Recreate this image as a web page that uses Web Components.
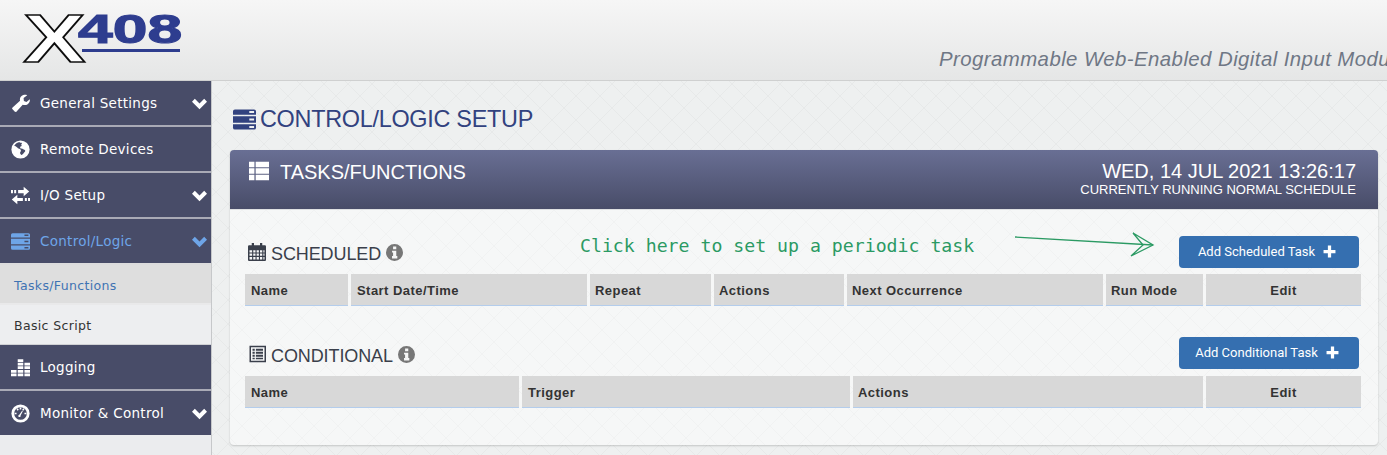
<!DOCTYPE html>
<html>
<head>
<meta charset="utf-8">
<title>X408 Control/Logic Setup</title>
<style>
  html, body { margin: 0; height: 455px; overflow: hidden; }
  body {
    font-family: "Liberation Sans", Arial, sans-serif;
    background-color: #eef0f0;
    background-image: url("data:image/svg+xml,%3Csvg xmlns='http://www.w3.org/2000/svg' width='24' height='24'%3E%3Cpath d='M0 0L24 24M24 0L0 24' stroke='%23e7e9e9' stroke-width='1' fill='none'/%3E%3C/svg%3E");
  }
  .layout { display: flex; height: 374px; }
</style>
</head>
<body>

<app-header tagline="Programmable Web-Enabled Digital Input Module"></app-header>
<div class="layout">
  <side-nav>
    <nav-item icon="wrench" arrow>General Settings</nav-item>
    <nav-item icon="globe">Remote Devices</nav-item>
    <nav-item icon="exchange" arrow>I/O Setup</nav-item>
    <nav-item icon="server" arrow active>Control/Logic</nav-item>
    <sub-item current>Tasks/Functions</sub-item>
    <sub-item>Basic Script</sub-item>
    <nav-item icon="bars">Logging</nav-item>
    <nav-item icon="gauge" arrow last>Monitor &amp; Control</nav-item>
  </side-nav>
  <main-area heading="CONTROL/LOGIC SETUP">
    <task-panel heading="TASKS/FUNCTIONS" clock="WED, 14 JUL 2021 13:26:17" status="CURRENTLY RUNNING NORMAL SCHEDULE">
      <task-section icon="calendar" heading="SCHEDULED" button="Add Scheduled Task"
        cols="103px 236px 121px 130px 256px 97px 155px"
        names="Name|Start Date/Time|Repeat|Actions|Next Occurrence|Run Mode|Edit"></task-section>
      <task-section icon="listalt" heading="CONDITIONAL" button="Add Conditional Task"
        cols="274px 328px 350px 155px"
        names="Name|Trigger|Actions|Edit"></task-section>
      <click-note slot="note">Click here to set up a periodic task</click-note>
    </task-panel>
  </main-area>
</div>

<script>
// shared icon paths
const ICONS = {
  wrench: '<path fill="currentColor" d="M5.2 22.6 2 19.4a1.6 1.6 0 0 1 0-2.3l9.4-8.6C10.6 5.2 12.4 2.400 15.500 1.400c1.700-.6 3.400-.5 5 .2l-4.600 3.600.4 3.500 3.200 1.300 4.300-3.500c.3 2.600-.6 4.800-2.700 6.300-2 1.400-4.200 1.500-6.300.7l-8.300 9.300a1.600 1.600 0 0 1-1.300-.7z"/>',
  globe: '<circle cx="12" cy="12" r="11.500" fill="currentColor"/><path fill="#484c68" d="M11 2.500c-3 .4-5.600 2.200-7 4.800 1.500.2 2.300 1.200 3.500 1.800 1.100.6 1.500 1.800 2.800 2 1.300.3 2.400 1 2.200 2.500-.1 1.200-1.300 1.700-1 3 .2 1 1.300 1.400 1.600 2.500 1.200-.4 2.200-1.700 3-2.800.6-.9 1.800-1.300 1.900-2.500.1-1-1-1.500-1.900-1.900-1.100-.5-2.100-.9-3.300-1.100-.9-.2-1.500-1-1.200-2 .3-.8 1.300-.6 1.700-1.200.4-.8-.4-1.300-.3-2.100 0-.8 1-1 .9-1.800-.7-.2-1.700-.3-2.900-.2z"/>',
  exchange: '<path fill="currentColor" d="M9 5h7V1l7 6-7 6V9H9zM4 5h2.500v4H4zM0 5h2.500v4H0zM15 15H8v-4l-7 6 7 6v-4h7zM17.500 15H20v4h-2.500zM21.500 15H24v4h-2.500z"/>',
  server: '<path fill="currentColor" fill-rule="evenodd" d="M2 1.500h20a2 2 0 0 1 2 2v3.500H0V3.500a2 2 0 0 1 2-2zM17 3.200v2h5v-2zM0 8.500h24v7H0zM17 11v2h5v-2zM0 17h24v3.500a2 2 0 0 1-2 2H2a2 2 0 0 1-2-2zM17 18.800v2h5v-2z"/>',
  bars: '<path fill="currentColor" d="M0 19.500h7V23H0zM0 15h7v3.500H0zM8.500 19.500h7V23h-7zM8.500 15h7v3.500h-7zM8.500 10.500h7V14h-7zM8.500 6h7v3.500h-7zM8.500 1.500h7V5h-7zM17 19.500h7V23h-7zM17 15h7v3.500h-7zM17 10.500h7V14h-7zM17 6h7v3.500h-7z"/>',
  gauge: '<circle cx="12" cy="12" r="11.500" fill="currentColor"/><circle cx="12" cy="12" r="8" fill="#484c68"/><path fill="currentColor" d="M4.500 11h2.500v2H4.500zM17 11h2.500v2H17zM7 6.500l1.500-1 1.300 1.800-1.500 1.100zM11 4.500h2V7h-2zM15.500 5.500l1.500 1-1.500 2-1.500-1zM10.500 13.500l3.500-5 .9.600-2.800 5.300a1.500 1.500 0 1 1-1.600-.900z"/>',
  chevron: '<path fill="currentColor" d="M12 21 0 9l4.500-4.500L12 12l7.500-7.500L24 9z"/>',
  list: '<path fill="currentColor" d="M0 1h6.500v6.500H0zM8 1h16v6.500H8zM0 8.750h6.500v6.500H0zM8 8.750h16v6.500H8zM0 16.500h6.500V23H0zM8 16.500h16V23H8z"/>',
  calendar: '<path fill="currentColor" fill-rule="evenodd" d="M5 0h3v3h8V0h3v3h3.500A1.500 1.500 0 0 1 24 4.500V22.500a1.500 1.500 0 0 1-1.500 1.500h-21A1.500 1.500 0 0 1 0 22.500V4.500A1.500 1.500 0 0 1 1.500 3H5zM2 9.500v3h3.500v-3zM7 9.500v3h3v-3zM11.500 9.500v3h3v-3zM16 9.500v3h3v-3zM20.500 9.500v3H22v-3zM2 14v3h3.500v-3zM7 14v3h3v-3zM11.500 14v3h3v-3zM16 14v3h3v-3zM20.500 14v3H22v-3zM2 18.500V22h3.500v-3.500zM7 18.500V22h3v-3.500zM11.500 18.500V22h3v-3.500zM16 18.500V22h3v-3.500zM20.500 18.500V22H22v-3.500z"/>',
  listalt: '<path fill="currentColor" fill-rule="evenodd" d="M2 1h22v22H2zM4 3v18h18V3zM6 5h3v2.500H6zM10.500 5H20v2.500h-9.500zM6 9h3v2.500H6zM10.500 9H20v2.500h-9.500zM6 13h3v2.500H6zM10.500 13H20v2.500h-9.500zM6 17h3v2H6zM10.500 17H20v2h-9.500z"/>',
  info: '<path fill="currentColor" fill-rule="evenodd" d="M12 0a12 12 0 1 1 0 24 12 12 0 0 1 0-24zM10 3.500v4h4.500v-4zM8.500 9.500v2.500H10v5H8.500v3.500h7.500V17h-1.500V9.500z"/>',
  plus: '<path fill="currentColor" d="M9 1h6v8h8v6h-8v8H9v-8H1V9h8z"/>'
};

function iconSvg(name, size) {
  return `<svg viewBox="0 0 24 24" width="${size}" height="${size}" aria-hidden="true">${ICONS[name]}</svg>`;
}

class AppHeader extends HTMLElement {
  constructor() {
    super();
    this.attachShadow({ mode: "open" });
  }
  connectedCallback() {
    const tagline = this.getAttribute("tagline") || "";
    this.shadowRoot.innerHTML = `
      <style>
        :host {
          display: flex;
          height: 81px;
          box-sizing: border-box;
          background: linear-gradient(#f6f6f6, #e5e6e6);
          border-bottom: 1px solid #cfd0d0;
          overflow: hidden;
        }
        svg { display: block; flex: none; }
        .tag {
          flex: none;
          align-self: flex-end;
          margin-left: 739px;
          padding-bottom: 9px;
          font: italic 20.400px "Liberation Sans", Arial, sans-serif;
          letter-spacing: .43px;
          color: #6f7785;
          white-space: nowrap;
        }
      </style>
      <svg width="200" height="80" viewBox="0 0 200 80">
        <text x="17" y="62.500" transform="scale(1.37 1)" font-family="Liberation Sans" font-weight="700" font-size="68" fill="#fff" stroke="#0c0c0c" stroke-width="1.500">X</text>
        <text x="50" y="43.500" transform="scale(1.56 1)" font-family="Liberation Sans" font-weight="700" font-size="40" fill="#2e3d8f" stroke="#2e3d8f" stroke-width="1.100">408</text>
        <rect x="82" y="49" width="98" height="3" fill="#2e3d8f"/>
      </svg>
      <div class="tag">${tagline}</div>
    `;
  }
}
customElements.define("app-header", AppHeader);

class SideNav extends HTMLElement {
  constructor() {
    super();
    this.attachShadow({ mode: "open" });
    this.shadowRoot.innerHTML = `
      <style>
        :host {
          display: block;
          flex: none;
          width: 212px;
          box-sizing: border-box;
          border-right: 1px solid #c6c8ca;
          background: #ebecee;
        }
      </style>
      <slot></slot>
    `;
  }
}
customElements.define("side-nav", SideNav);

class NavItem extends HTMLElement {
  constructor() {
    super();
    this.attachShadow({ mode: "open" });
  }
  connectedCallback() {
    const icon = this.getAttribute("icon");
    const arrow = this.hasAttribute("arrow")
      ? `<span class="arrow">${iconSvg("chevron", 15)}</span>` : "";
    this.shadowRoot.innerHTML = `
      <style>
        :host {
          display: flex;
          align-items: center;
          height: 46px;
          box-sizing: border-box;
          padding: 0 4px 0 11px;
          background: #484c68;
          border-bottom: 2px solid #a9aab6;
          color: #fff;
          font: 13.500px/1 "DejaVu Sans", Verdana, sans-serif;
          letter-spacing: .28px;
        }
        :host([active]) { color: #6ea5e8; border-bottom-color: #dcdcdd; }
        :host([last]) { height: 44px; border-bottom: 0; }
        .ic { display: flex; width: 29px; flex: none; }
        .label { flex: 1; white-space: nowrap; padding-top: 2px; }
        .arrow { display: flex; flex: none; margin-top: 1px; }
      </style>
      <span class="ic">${iconSvg(icon, 19)}</span>
      <span class="label"><slot></slot></span>
      ${arrow}
    `;
  }
}
customElements.define("nav-item", NavItem);

class SubItem extends HTMLElement {
  constructor() {
    super();
    this.attachShadow({ mode: "open" }).innerHTML = `
      <style>
        :host {
          display: flex;
          align-items: center;
          height: 40px;
          box-sizing: border-box;
          padding: 4px 14px 0;
          color: #333;
          background: #edeef0;
          border-bottom: 1px solid #d0d1d4;
          font: 12.500px/1 "DejaVu Sans", Verdana, sans-serif;
          letter-spacing: .35px;
        }
        :host([current]) {
          color: #3f73b3;
          background: #dedede;
          border-bottom: 2px solid #e9e9ea;
        }
      </style>
      <slot></slot>
    `;
  }
}
customElements.define("sub-item", SubItem);

class MainArea extends HTMLElement {
  constructor() {
    super();
    this.attachShadow({ mode: "open" });
  }
  connectedCallback() {
    this.shadowRoot.innerHTML = `
      <style>
        :host { display: block; flex: 1; min-width: 0; padding: 0 9px 0 18px; }
        h1 {
          display: flex;
          align-items: center;
          gap: 4px;
          height: 69px;
          box-sizing: border-box;
          margin: 0;
          padding: 7px 0 0 3px;
          font: 400 23.400px "Liberation Sans", Arial, sans-serif;
          letter-spacing: -.27px;
          color: #32427f;
        }
        svg { flex: none; }
      </style>
      <h1>${iconSvg("server", 23)}<span>${this.getAttribute("heading")}</span></h1>
      <slot></slot>
    `;
  }
}
customElements.define("main-area", MainArea);

class TaskPanel extends HTMLElement {
  constructor() {
    super();
    this.attachShadow({ mode: "open" });
  }
  connectedCallback() {
    this.shadowRoot.innerHTML = `
      <style>
        :host {
          display: block;
          position: relative;
          height: 295px;
          border-radius: 4px;
          box-shadow: 0 1px 2px rgba(0,0,0,.18);
          background-color: #f6f7f7;
          background-image: url("data:image/svg+xml,%3Csvg xmlns='http://www.w3.org/2000/svg' width='24' height='24'%3E%3Cpath d='M0 0L24 24M24 0L0 24' stroke='%23f1f2f2' fill='none'/%3E%3C/svg%3E");
        }
        header {
          display: flex;
          justify-content: space-between;
          height: 60px;
          box-sizing: border-box;
          padding: 11px 22px 0 19px;
          border-radius: 4px 4px 0 0;
          background: linear-gradient(#696f94, #484c68);
          border-bottom: 1px solid #dfe0e2;
          color: #fff;
        }
        .title { display: flex; align-items: flex-start; gap: 11px; font-size: 20px; line-height: 23px; letter-spacing: -.03px; }
        .title svg { flex: none; }
        .right { text-align: right; }
        .clock { font-size: 20px; line-height: 20px; }
        .status { font-size: 13px; line-height: 15px; margin-top: 1px; }
        .body { padding: 0 17px 0 15px; }
      </style>
      <header>
        <div class="title">${iconSvg("list", 20)}<span>${this.getAttribute("heading")}</span></div>
        <div class="right">
          <div class="clock">${this.getAttribute("clock")}</div>
          <div class="status">${this.getAttribute("status")}</div>
        </div>
      </header>
      <div class="body"><slot></slot></div>
      <slot name="note"></slot>
    `;
  }
}
customElements.define("task-panel", TaskPanel);

class TaskSection extends HTMLElement {
  constructor() {
    super();
    this.attachShadow({ mode: "open" });
  }
  connectedCallback() {
    const names = this.getAttribute("names").split("|");
    const cells = names.map(n => `<div class="cell${n === "Edit" ? " mid" : ""}">${n}</div>`).join("");
    this.shadowRoot.innerHTML = `
      <style>
        :host { display: block; height: 102px; }
        .top {
          display: flex;
          align-items: flex-start;
          justify-content: space-between;
          height: 64px;
          box-sizing: border-box;
          padding: 0 2px 0 3px;
        }
        .name {
          display: flex;
          align-items: center;
          gap: 5px;
          margin-top: 34px;
          font-size: 18px;
          line-height: 20px;
          letter-spacing: -.1px;
          color: #3a3f4b;
        }
        .name > svg { flex: none; margin-top: -4px; }
        .info { display: flex; color: #777; margin: -3px 0 0 0; }
        button {
          display: flex;
          align-items: center;
          justify-content: center;
          gap: 8px;
          width: 180px;
          height: 32px;
          margin-top: 26px;
          padding: 0 4px 2px 0;
          border: 0;
          border-radius: 4px;
          background: #356fb0;
          color: #fff;
          font: 13px "Roboto", "Liberation Sans", sans-serif;
        }
        :host([icon="listalt"]) button { margin-top: 25px; }
        .grid {
          display: grid;
          grid-template-columns: ${this.getAttribute("cols")};
          column-gap: 3px;
        }
        .cell {
          height: 32px;
          box-sizing: border-box;
          padding: 10px 5px 0;
          background: #d8d8d8;
          border-bottom: 1px solid #b4cdec;
          color: #333;
          font: 700 13px/14px "Liberation Sans", Arial, sans-serif;
          white-space: nowrap;
          letter-spacing: .45px;
        }
        .cell:nth-child(-n+2) { padding-left: 6px; }
        .mid { text-align: center; }
      </style>
      <div class="top">
        <div class="name">
          ${iconSvg(this.getAttribute("icon"), 18)}
          <span>${this.getAttribute("heading")}</span>
          <span class="info">${iconSvg("info", 17)}</span>
        </div>
        <button type="button">${this.getAttribute("button")} ${iconSvg("plus", 13)}</button>
      </div>
      <div class="grid">${cells}</div>
    `;
  }
}
customElements.define("task-section", TaskSection);

// green annotation lies on top of the panel
class ClickNote extends HTMLElement {
  constructor() {
    super();
    this.attachShadow({ mode: "open" }).innerHTML = `
      <style>
        :host { display: block; position: absolute; left: 350px; top: 85px; width: 580px; height: 30px; }
        span {
          position: absolute;
          left: 0;
          top: 0;
          font: 18.200px/22px "DejaVu Sans Mono", "Liberation Mono", monospace;
          color: #2b9a63;
          white-space: nowrap;
        }
        svg { position: absolute; left: 430px; top: 0; overflow: visible; }
      </style>
      <span><slot></slot></span>
      <svg width="150" height="30" viewBox="0 0 150 30" fill="none" stroke="#2b9a63" stroke-width="1.300">
        <path d="M5 2 143 10"/>
        <path d="M123 -2 143 10 121 21 133 10z"/>
      </svg>
    `;
  }
}
customElements.define("click-note", ClickNote);
</script>
</body>
</html>
